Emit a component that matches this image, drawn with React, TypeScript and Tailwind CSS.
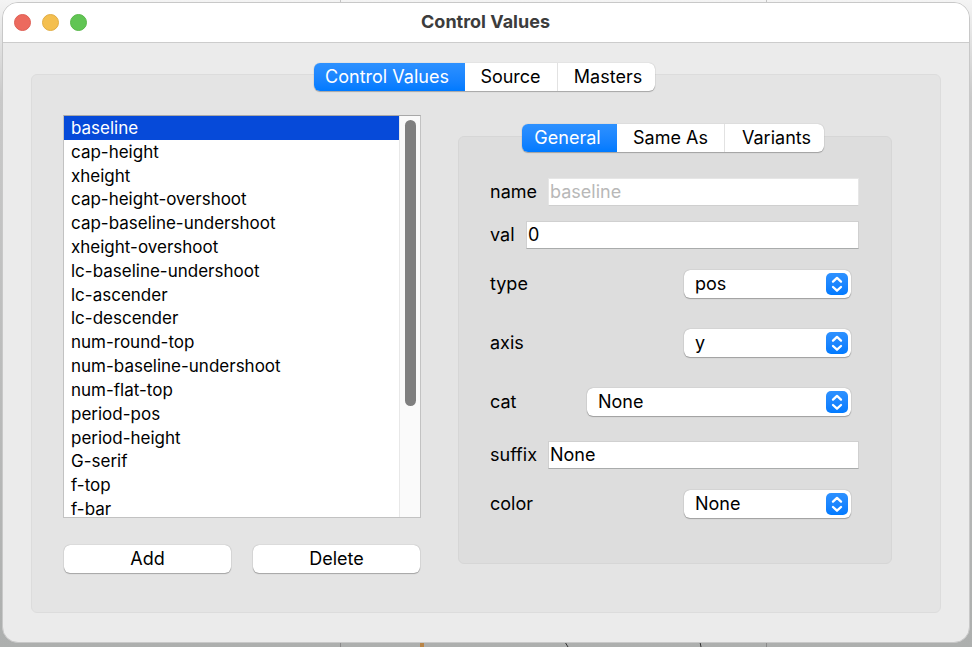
import { useState } from "react";
import type { ReactNode } from "react";

const controlValues = [
  "baseline",
  "cap-height",
  "xheight",
  "cap-height-overshoot",
  "cap-baseline-undershoot",
  "xheight-overshoot",
  "lc-baseline-undershoot",
  "lc-ascender",
  "lc-descender",
  "num-round-top",
  "num-baseline-undershoot",
  "num-flat-top",
  "period-pos",
  "period-height",
  "G-serif",
  "f-top",
  "f-bar",
];

type Tab = { label: string; width: string };

const outerTabs: Tab[] = [
  { label: "Control Values", width: "w-[151px]" },
  { label: "Source", width: "w-[92px]" },
  { label: "Masters", width: "w-[98px]" },
];

const innerTabs: Tab[] = [
  { label: "General", width: "w-[95px]" },
  { label: "Same As", width: "w-[107px]" },
  { label: "Variants", width: "w-[100px]" },
];

function Segmented({ tabs, name }: { tabs: Tab[]; name: string }) {
  const [active, setActive] = useState(0);
  return (
    <div className="relative z-10 flex justify-center pr-1">
      <div
        role="tablist"
        aria-label={name}
        className="flex h-7 overflow-hidden rounded-md bg-white shadow-[0_1px_1px_rgba(0,0,0,0.25),0_0_1px_rgba(0,0,0,0.3)]"
      >
        {tabs.map((tab, i) => (
          <button
            key={tab.label}
            type="button"
            role="tab"
            aria-selected={i === active}
            onClick={() => setActive(i)}
            className={`${tab.width} whitespace-nowrap text-lg leading-7 ${
              i === active
                ? "bg-linear-to-b from-[#2d91ff] to-[#007aff] pr-1 text-white"
                : i > 1
                  ? "border-l border-[#e2e2e2] pl-1"
                  : "text-black"
            }`}
          >
            {tab.label}
          </button>
        ))}
      </div>
    </div>
  );
}

function TextField({
  id,
  value,
  labelWidth,
  spacing,
  disabled,
}: {
  id: string;
  value: string;
  labelWidth: string;
  spacing: string;
  disabled?: boolean;
}) {
  return (
    <div className={`flex h-7 items-center ${spacing}`}>
      <label htmlFor={id} className={`${labelWidth} shrink-0`}>
        {id}
      </label>
      <input
        id={id}
        type="text"
        defaultValue={value}
        disabled={disabled}
        className={`h-7 min-w-0 flex-1 border bg-white px-px ${
          disabled
            ? "border-[#e6e6e6] border-b-[#cfcfcf] text-[#b8b8b8]"
            : "border-[#d0d0d0] border-b-[#a9abab] text-black"
        }`}
      />
    </div>
  );
}

function Popup({
  id,
  options,
  width,
  spacing,
}: {
  id: string;
  options: string[];
  width: string;
  spacing: string;
}) {
  return (
    <div className={`flex h-[30px] items-center justify-between pr-2 ${spacing}`}>
      <label htmlFor={id}>{id}</label>
      <div className={`relative ${width}`}>
        <select
          id={id}
          className="block h-7 w-full appearance-none rounded-md bg-white pl-[11px] pr-8 text-lg leading-7 text-black shadow-[0_1px_1px_rgba(0,0,0,0.25),0_0_1px_rgba(0,0,0,0.4)]"
        >
          {options.map((option) => (
            <option key={option}>{option}</option>
          ))}
        </select>
        <span className="pointer-events-none absolute right-[3px] top-[3px] h-[22px] w-[22px] rounded-[5px] bg-linear-to-b from-[#2d91ff] to-[#007aff]">
          <svg
            viewBox="0 0 22 22"
            className="h-full w-full"
            fill="none"
            stroke="white"
            strokeWidth="2.3"
            strokeLinecap="round"
            strokeLinejoin="round"
          >
            <path d="M7 8.6 11 4.9 15 8.6M7 14 11 17.7 15 14" />
          </svg>
        </span>
      </div>
    </div>
  );
}

function PushButton({ children }: { children: ReactNode }) {
  return (
    <button
      type="button"
      className="h-7 flex-1 rounded-md bg-white text-lg leading-7 text-black shadow-[0_1px_1px_rgba(0,0,0,0.25),0_0_1px_rgba(0,0,0,0.4)]"
    >
      {children}
    </button>
  );
}

function Backdrop() {
  return (
    <svg
      aria-hidden="true"
      className="absolute inset-0 h-full w-full"
      viewBox="0 0 972 647"
      preserveAspectRatio="none"
    >
      <defs>
        <linearGradient id="shade" x1="0" y1="0" x2="0" y2="1">
          <stop offset="0" stopColor="#f4f4f4" />
          <stop offset="0.15" stopColor="#c9c9c9" />
          <stop offset="1" stopColor="#adafae" />
        </linearGradient>
      </defs>
      <rect width="972" height="647" fill="url(#shade)" />
      <path d="M340.5 0V3M766.5 0V3" stroke="#c4c4c4" />
      <path d="M340.5 642V647M766.5 642V647" stroke="#8a8a8a" />
      <path d="M422 642V647" stroke="#b98548" strokeWidth="4" />
      <path d="M565 642 568 647M700 642 701 647" stroke="#333" />
    </svg>
  );
}

export default function App() {
  const [selected, setSelected] = useState("baseline");

  return (
    <div className="relative min-h-screen overflow-hidden px-0.5 pb-1 pt-0.5 font-['Inter','Liberation_Sans',sans-serif] text-lg leading-7 text-black">
      <Backdrop />
      <section className="relative overflow-hidden rounded-2xl border border-[#c8c8c8] bg-[#ebebeb]">
        <header className="grid h-10 grid-cols-[1fr_auto_1fr] items-center border-b border-[#cccccc] bg-white pb-px pl-[11px] pr-3">
          <div className="flex gap-[11px]">
            <button type="button" aria-label="Close" className="size-[17px] rounded-full border border-[#de5f55] bg-[#ec6a5e]" />
            <button type="button" aria-label="Minimize" className="size-[17px] rounded-full border border-[#e0ac44] bg-[#f4bf4f]" />
            <button type="button" aria-label="Zoom" className="size-[17px] rounded-full border border-[#58b749] bg-[#61c554]" />
          </div>
          <h1 className="text-lg font-bold leading-7 text-[#3c3c3c]">Control Values</h1>
        </header>

        <main className="px-7 pb-[29px] pt-5">
          <Segmented tabs={outerTabs} name="Sections" />
          <div className="-mt-[17px] flex items-start rounded-md border border-[#dcdcdc] bg-[#e4e4e4] pb-[39px] pl-[31px] pr-12 pt-10">
            <div className="w-[358px] shrink-0">
              <div className="flex h-[403px] overflow-hidden border border-[#c2c2c2] border-t-[#a8a8a8] bg-white">
                <ul
                  role="listbox"
                  aria-label="Control values"
                  className="grid h-[405px] flex-1 auto-rows-fr text-[17px]"
                >
                  {controlValues.map((value) => (
                    <li
                      key={value}
                      role="option"
                      aria-selected={value === selected}
                      onClick={() => setSelected(value)}
                      className={`flex items-center whitespace-nowrap pl-[7px] leading-5 ${
                        value === selected ? "bg-[#064ad9] text-white" : ""
                      }`}
                    >
                      {value}
                    </li>
                  ))}
                </ul>
                <div className="w-[21px] border-l border-[#e8e8e8] bg-[#fafafa] pl-[5px] pt-1">
                  <div className="h-[286px] w-[11px] rounded-full bg-[#7f7f7f]" />
                </div>
              </div>
              <div className="mt-[27px] flex gap-[22px] px-px">
                <PushButton>Add</PushButton>
                <PushButton>Delete</PushButton>
              </div>
            </div>

            <div className="ml-[37px] mt-[9px] min-w-0 flex-1">
              <Segmented tabs={innerTabs} name="Properties" />
              <form className="-mt-4 rounded-md border border-[#d6d6d6] bg-[#dddddd] pb-11 pl-[31px] pr-8 pt-[41px]">
                <TextField id="name" value="baseline" labelWidth="w-[58px]" spacing="" disabled />
                <TextField id="val" value="0" labelWidth="w-9" spacing="mt-[15px]" />
                <Popup id="type" options={["pos", "dist"]} width="w-[167px]" spacing="mt-5" />
                <Popup id="axis" options={["y", "x"]} width="w-[167px]" spacing="mt-[29px]" />
                <Popup id="cat" options={["None"]} width="w-[264px]" spacing="mt-[29px]" />
                <TextField id="suffix" value="None" labelWidth="w-[58px]" spacing="mt-6" />
                <Popup id="color" options={["None"]} width="w-[167px]" spacing="mt-5" />
              </form>
            </div>
          </div>
        </main>
      </section>
    </div>
  );
}
